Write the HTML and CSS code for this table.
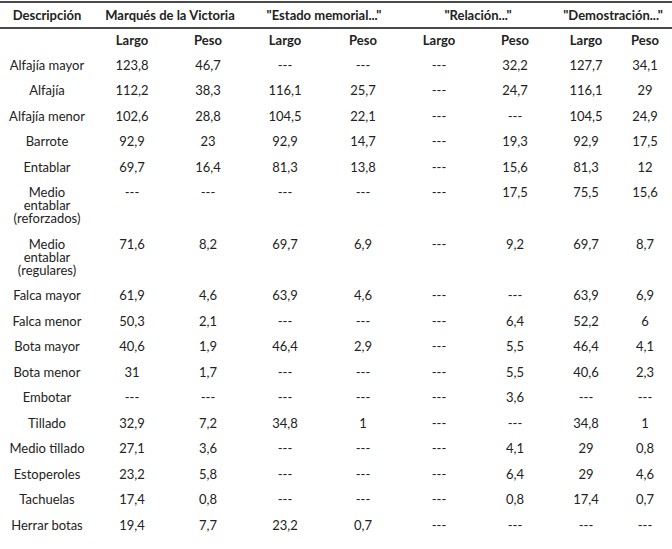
FILE: index.html
```html
<!DOCTYPE html>
<html lang="es">
<head>
<meta charset="utf-8">
<title>Tabla</title>
<link rel="stylesheet" href="styles.css">
</head>
<body>
<table class="data">
  <colgroup>
    <col class="c-desc"><col class="c-a"><col class="c-b"><col class="c-c"><col class="c-d"><col class="c-e"><col class="c-f"><col class="c-g"><col class="c-h">
  </colgroup>
  <thead>
    <tr class="head-main">
      <th>Descripción</th>
      <th colspan="2">Marqués de la Victoria</th>
      <th colspan="2">"Estado memorial..."</th>
      <th colspan="2">"Relación..."</th>
      <th colspan="2">"Demostración..."</th>
    </tr>
  </thead>
  <tbody>
    <tr class="head-sub">
      <th></th><th>Largo</th><th>Peso</th><th>Largo</th><th>Peso</th><th>Largo</th><th>Peso</th><th>Largo</th><th>Peso</th>
    </tr>
    <tr><td>Alfajía mayor</td><td>123,8</td><td>46,7</td><td>---</td><td>---</td><td>---</td><td>32,2</td><td>127,7</td><td>34,1</td></tr>
    <tr><td>Alfajía</td><td>112,2</td><td>38,3</td><td>116,1</td><td>25,7</td><td>---</td><td>24,7</td><td>116,1</td><td>29</td></tr>
    <tr><td>Alfajía menor</td><td>102,6</td><td>28,8</td><td>104,5</td><td>22,1</td><td>---</td><td>---</td><td>104,5</td><td>24,9</td></tr>
    <tr><td>Barrote</td><td>92,9</td><td>23</td><td>92,9</td><td>14,7</td><td>---</td><td>19,3</td><td>92,9</td><td>17,5</td></tr>
    <tr><td>Entablar</td><td>69,7</td><td>16,4</td><td>81,3</td><td>13,8</td><td>---</td><td>15,6</td><td>81,3</td><td>12</td></tr>
    <tr><td>Medio entablar (reforzados)</td><td>---</td><td>---</td><td>---</td><td>---</td><td>---</td><td>17,5</td><td>75,5</td><td>15,6</td></tr>
    <tr><td>Medio entablar (regulares)</td><td>71,6</td><td>8,2</td><td>69,7</td><td>6,9</td><td>---</td><td>9,2</td><td>69,7</td><td>8,7</td></tr>
    <tr><td>Falca mayor</td><td>61,9</td><td>4,6</td><td>63,9</td><td>4,6</td><td>---</td><td>---</td><td>63,9</td><td>6,9</td></tr>
    <tr><td>Falca menor</td><td>50,3</td><td>2,1</td><td>---</td><td>---</td><td>---</td><td>6,4</td><td>52,2</td><td>6</td></tr>
    <tr><td>Bota mayor</td><td>40,6</td><td>1,9</td><td>46,4</td><td>2,9</td><td>---</td><td>5,5</td><td>46,4</td><td>4,1</td></tr>
    <tr><td>Bota menor</td><td>31</td><td>1,7</td><td>---</td><td>---</td><td>---</td><td>5,5</td><td>40,6</td><td>2,3</td></tr>
    <tr><td>Embotar</td><td>---</td><td>---</td><td>---</td><td>---</td><td>---</td><td>3,6</td><td>---</td><td>---</td></tr>
    <tr><td>Tillado</td><td>32,9</td><td>7,2</td><td>34,8</td><td>1</td><td>---</td><td>---</td><td>34,8</td><td>1</td></tr>
    <tr><td>Medio tillado</td><td>27,1</td><td>3,6</td><td>---</td><td>---</td><td>---</td><td>4,1</td><td>29</td><td>0,8</td></tr>
    <tr><td>Estoperoles</td><td>23,2</td><td>5,8</td><td>---</td><td>---</td><td>---</td><td>6,4</td><td>29</td><td>4,6</td></tr>
    <tr><td>Tachuelas</td><td>17,4</td><td>0,8</td><td>---</td><td>---</td><td>---</td><td>0,8</td><td>17,4</td><td>0,7</td></tr>
    <tr><td>Herrar botas</td><td>19,4</td><td>7,7</td><td>23,2</td><td>0,7</td><td>---</td><td>---</td><td>---</td><td>---</td></tr>
  </tbody>
</table>
</body>
</html>
```

FILE: styles.css
```css
html, body {
  margin: 0;
  padding: 0;
  background: #ffffff;
}

body {
  padding-top: 1px;
  font-family: Lato, "Open Sans", sans-serif;
  font-size: 13px;
  color: #222222;
}

.data {
  width: 672px;
  border-collapse: collapse;
  table-layout: fixed;
  border-top: 2px solid #4a4a4a;
}

.c-desc { width: 94px; }
.c-a { width: 76px; }
.c-b { width: 76px; }
.c-c { width: 78px; }
.c-d { width: 78px; }
.c-e { width: 74px; }
.c-f { width: 78px; }
.c-g { width: 64px; }
.c-h { width: 54px; }

.data th,
.data td {
  text-align: center;
  vertical-align: top;
  line-height: 13px;
  padding: 6.25px 5px;
  font-weight: 400;
}

.head-main th {
  font-weight: 700;
  padding: 5.5px 2px;
  white-space: nowrap;
  border-bottom: 2px solid #4a4a4a;
}

.head-sub th {
  font-weight: 700;
  padding: 5px 5px 5.25px;
}
```
